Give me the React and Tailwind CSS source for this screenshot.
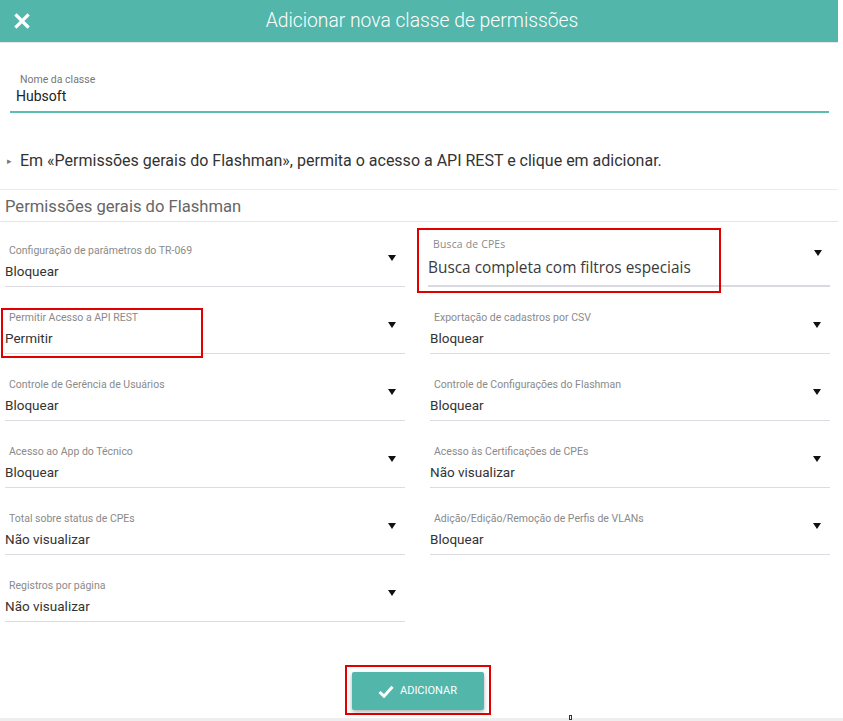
import React from "react";

const left = [
  { label: "Configuração de parâmetros do TR-069", value: "Bloquear" },
  { label: "Permitir Acesso a API REST", value: "Permitir", box: true },
  { label: "Controle de Gerência de Usuários", value: "Bloquear" },
  { label: "Acesso ao App do Técnico", value: "Bloquear" },
  { label: "Total sobre status de CPEs", value: "Não visualizar" },
  { label: "Registros por página", value: "Não visualizar" },
];
const right = [
  { label: "Busca de CPEs", value: "Busca completa com filtros especiais", special: true },
  { label: "Exportação de cadastros por CSV", value: "Bloquear" },
  { label: "Controle de Configurações do Flashman", value: "Bloquear" },
  { label: "Acesso às Certificações de CPEs", value: "Não visualizar" },
  { label: "Adição/Edição/Remoção de Perfis de VLANs", value: "Bloquear" },
  null,
];

function Arrow() {
  return (
    <svg width="8" height="6" viewBox="0 0 8 6" className="block">
      <path d="M0 0 L8 0 L4 6 Z" fill="#111" />
    </svg>
  );
}

function Field({ f }) {
  if (!f) return <div />;
  if (f.special) {
    return (
      <div className="relative h-[43px]">
        <div className="absolute left-[-13px] top-[-16px] w-[304px] h-[65px] border-2 border-[#e00000]" />
        <div className="ml-[-2px] mt-[-7px]">
          <div className="pl-[5px] text-[10.4px] leading-[14px] text-[#8a8a8a] font-['Open_Sans',sans-serif] tracking-[0.2px]">{f.label}</div>
          <div className="mt-[6px] text-[15.4px] leading-[22px] text-[#3a3a3a] font-['Open_Sans',sans-serif]">{f.value}</div>
          <div className="mt-[6px] h-[2px] bg-[#d9d9e0]" />
        </div>
        <div className="absolute right-[8px] top-[6px]"><Arrow /></div>
      </div>
    );
  }
  return (
    <div className="relative">
      {f.box && <div className="absolute left-[-4px] top-[-3px] w-[202px] h-[50px] border-2 border-[#e00000]" />}
      <div className="border-b border-[#dcdce2] pb-[5px]">
        <div className="pl-[4px] text-[10.5px] leading-[14px] text-[#8a8a8a]">{f.label}</div>
        <div className="mt-[3px] text-[13.5px] leading-[20px] text-[#333]">{f.value}</div>
      </div>
      <div className="absolute right-[9px] top-[11px]"><Arrow /></div>
    </div>
  );
}

export default function App() {
  const rows = left.map((l, i) => [l, right[i]]).flat();
  return (
    <div className="w-[843px] h-[721px] bg-white overflow-hidden font-['Roboto',sans-serif] flex flex-col">
      <div className="w-[838px] h-[43px] bg-[#52b6ab] grid grid-cols-[60px_1fr_60px] items-center border-b border-[#e6e6e6]">
        <div className="pl-[14px] flex items-center">
          <svg width="16" height="16" viewBox="0 0 16 16">
            <path d="M2.5 2.5 L13.5 13.5 M13.5 2.5 L2.5 13.5" stroke="#fff" strokeWidth="3.2" strokeLinecap="square" />
          </svg>
        </div>
        <div className="text-center text-white text-[19.3px] font-light pl-[6px]">Adicionar nova classe de permissões</div>
        <div />
      </div>

      <div className="pl-[10px] w-[829px] mt-[30px]">
        <div className="pl-[10px] text-[10.5px] leading-[14px] text-[#777]">Nome da classe</div>
        <div className="pl-[6px] mt-[-1px] text-[14px] leading-[20px] text-[#222]">Hubsoft</div>
        <div className="mt-[5px] h-[2px] bg-[#5bbcb0]" />
      </div>

      <div className="mt-[38px] pl-[7px] flex items-center text-[16px] leading-[20px] text-[#333]">
        <span className="text-[9px] text-[#777] mr-[8px]">▸</span>
        <span>Em «Permissões gerais do Flashman», permita o acesso a API REST e clique em adicionar.</span>
      </div>

      <div className="mt-[18px] w-[838px] border-t border-[#ececec]" />
      <div className="pl-[5px] pt-[7px] pb-[4px] text-[16.6px] leading-[20px] text-[#666] w-[838px] border-b border-[#e6e6e6]">Permissões gerais do Flashman</div>

      <div className="mt-[22px] w-[835px] px-[5px] grid grid-cols-2 gap-x-[25px] gap-y-[24px]">
        {rows.map((f, i) => (
          <Field key={i} f={f} />
        ))}
      </div>

      <div className="w-[835px] flex justify-center mt-[43px]">
        <div className="border-2 border-[#e00000] pt-[5px] pb-[3px] px-[5px]">
          <button className="w-[132px] h-[38px] bg-[#52b6ab] rounded-[2px] shadow-[0_2px_4px_rgba(0,0,0,0.3)] flex items-center justify-center gap-[6px] text-white text-[11px] font-normal">
            <svg width="16" height="13" viewBox="0 0 16 13">
              <path d="M1.5 7 L6 11.2 L14.5 1.8" stroke="#fff" strokeWidth="3" fill="none" strokeLinejoin="miter" />
            </svg>
            <span>ADICIONAR</span>
          </button>
        </div>
      </div>

      <div className="mt-[3px] flex-1 bg-[#eeeeee] relative">
        <div className="absolute left-[569px] top-[-3px] w-[3px] h-[5px] border border-[#333] bg-white" />
      </div>
    </div>
  );
}
